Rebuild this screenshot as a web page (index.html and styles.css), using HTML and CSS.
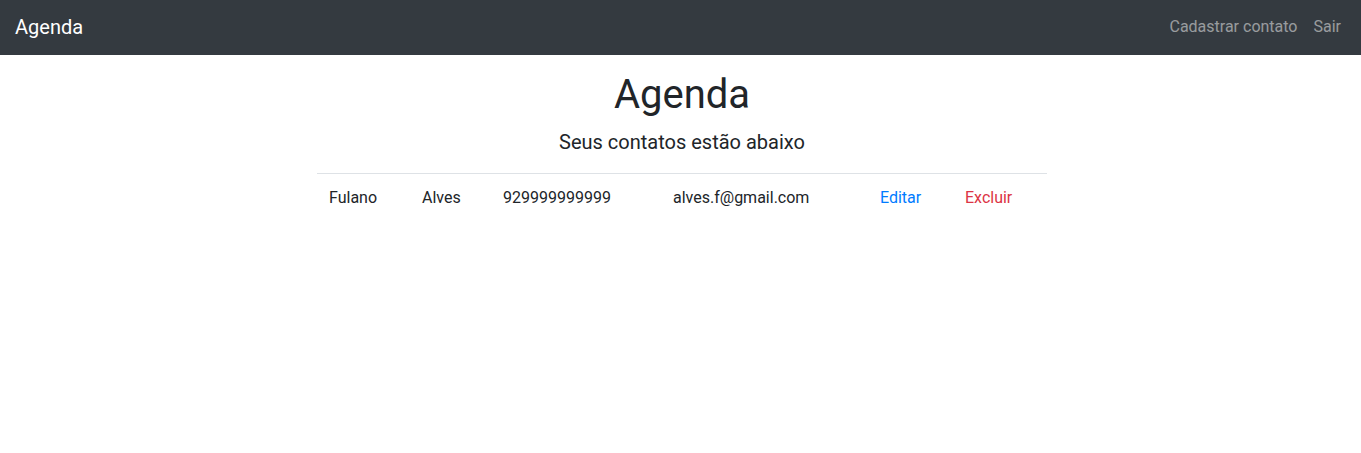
FILE: index.html
```html
<!DOCTYPE html>
<html lang="pt-BR">
<head>
<meta charset="utf-8">
<title>Agenda</title>
<link rel="stylesheet" href="styles.css">
</head>
<body>
<nav class="navbar">
  <a class="brand" href="#">Agenda</a>
  <ul class="nav">
    <li><a class="nav-link" href="#">Cadastrar contato</a></li>
    <li><a class="nav-link" href="#">Sair</a></li>
  </ul>
</nav>
<main class="container">
  <h1 class="title">Agenda</h1>
  <p class="lead">Seus contatos estão abaixo</p>
  <table class="table">
    <tbody>
      <tr>
        <td class="c1">Fulano</td>
        <td class="c2">Alves</td>
        <td class="c3">929999999999</td>
        <td class="c4">alves.f@gmail.com</td>
        <td class="c5"><a class="link-edit" href="#">Editar</a></td>
        <td class="c6"><a class="link-del" href="#">Excluir</a></td>
      </tr>
    </tbody>
  </table>
</main>
</body>
</html>
```
FILE: styles.css
```css
* { box-sizing: border-box; }
html, body { margin: 0; padding: 0; }
body {
  font-family: Roboto, "Liberation Sans", sans-serif;
  font-size: 16px;
  line-height: 1.5;
  color: #212529;
  background: #fff;
}
a { text-decoration: none; }

.navbar {
  height: 55px;
  background: #343a40;
  display: flex;
  align-items: center;
  justify-content: space-between;
  padding: 0 12px 0 15px;
}
.brand {
  color: #fff;
  font-size: 20px;
  line-height: 30px;
  padding: 4px 0 5px;
}
.nav {
  list-style: none;
  margin: 0;
  padding: 0;
  display: flex;
}
.nav-link {
  display: block;
  color: rgba(255, 255, 255, 0.5);
  padding: 7px 8px 9px;
}

.container {
  width: 730px;
  margin: 16px 0 0 calc(50% - 363.5px);
}
.title {
  font-size: 40px;
  font-weight: 400;
  line-height: 1.2;
  margin: 0 0 8px;
  text-align: center;
}
.lead {
  font-size: 20px;
  font-weight: 400;
  line-height: 1.5;
  margin: 0 0 16px;
  text-align: center;
}
.table {
  width: 730px;
  border-collapse: collapse;
}
.table td {
  padding: 12px;
  border-top: 1px solid #dee2e6;
  vertical-align: top;
  white-space: nowrap;
}
.c1 { width: 93px; }
.c2 { width: 81px; }
.c3 { width: 170px; }
.c4 { width: 207px; }
.c5 { width: 85px; }
.c6 { width: 94px; }
.link-edit { color: #007bff; }
.link-del { color: #dc3545; }
```
